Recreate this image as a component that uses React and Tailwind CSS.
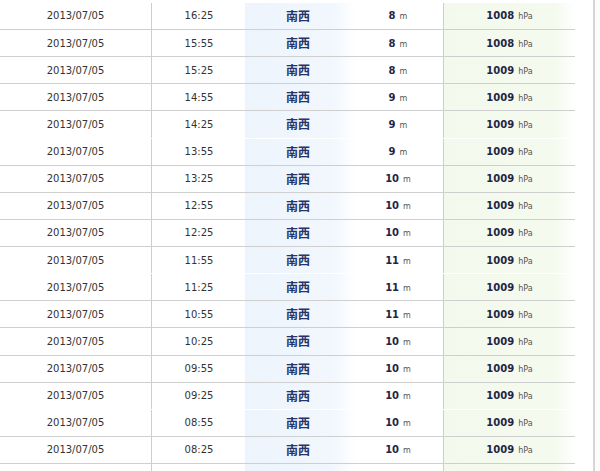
import React from 'react';

const rows = [
  ['16:25', 8, 1008],
  ['15:55', 8, 1008],
  ['15:25', 8, 1009],
  ['14:55', 9, 1009],
  ['14:25', 9, 1009],
  ['13:55', 9, 1009],
  ['13:25', 10, 1009],
  ['12:55', 10, 1009],
  ['12:25', 10, 1009],
  ['11:55', 11, 1009],
  ['11:25', 11, 1009],
  ['10:55', 11, 1009],
  ['10:25', 10, 1009],
  ['09:55', 10, 1009],
  ['09:25', 10, 1009],
  ['08:55', 10, 1009],
  ['08:25', 10, 1009],
  null,
];

// rows where the divider got lost in the original capture
const noLine = [4, 9, 14];

function Row({ data, line }) {
  return (
    <div
      className={`grid grid-cols-[152px_93px_110px_88px_132px] h-[27.125px] shrink-0 border-b ${
        line ? 'border-[#cfcfcf]' : 'border-transparent'
      }`}
    >
      <div className="flex items-center justify-center border-r border-[#cdcdcd] text-[10px] text-[#333]">
        {data && '2013/07/05'}
      </div>
      <div className="flex items-center justify-center pl-[1px] text-[10px] text-[#333]">{data && data[0]}</div>
      <div className="flex items-center justify-center bg-gradient-to-r from-[#edf4fc] via-[#f1f7fd] via-80% to-white pr-[4px]">
        {data && (
          <span className="font-bold text-[12px] text-[#25356a] font-['Noto_Sans_CJK_JP',sans-serif]">南西</span>
        )}
      </div>
      <div className="flex items-center justify-center gap-[4px] pr-[2px]">
        {data && (
          <>
            <span className="font-bold text-[10px] text-[#1f2545]">{data[1]}</span>
            <span className="text-[8px] text-[#555] mt-[3px]">m</span>
          </>
        )}
      </div>
      <div className="flex items-center justify-center gap-[4px] border-l border-[#cdcdcd] bg-gradient-to-r from-[#f3f9ec] via-[#f5faef] via-85% to-white">
        {data && (
          <>
            <span className="font-bold text-[10px] text-[#1f2545]">{data[2]}</span>
            <span className="text-[8px] text-[#555] mt-[3px]">hPa</span>
          </>
        )}
      </div>
    </div>
  );
}

export default function App() {
  return (
    <div className="w-[600px] h-[471px] overflow-hidden bg-white flex font-['DejaVu_Sans',Verdana,sans-serif]">
      <div className="w-[575px] flex flex-col pt-[2.875px]">
        {rows.map((r, i) => (
          <Row key={i} data={r} line={!noLine.includes(i)} />
        ))}
      </div>
      <div className="w-[18px]" />
      <div className="w-[2px] bg-[#d6d6d6]" />
      <div className="flex-1 bg-[#fcfcfc]" />
    </div>
  );
}
